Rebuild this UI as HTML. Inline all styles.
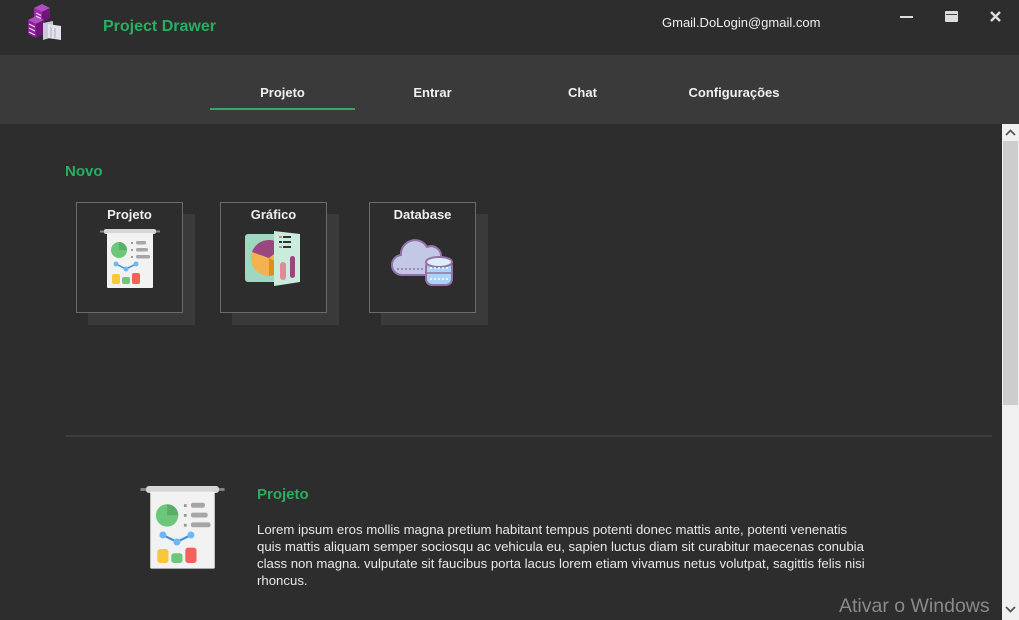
<!DOCTYPE html>
<html><head><meta charset="utf-8"><style>
*{margin:0;padding:0;box-sizing:border-box}
body{width:1019px;height:620px;overflow:hidden;background:#2d2d2d;font-family:"Liberation Sans","DejaVu Sans",sans-serif;position:relative;color:#eee}
.abs{position:absolute}
.top{left:0;top:0;width:1019px;height:55px;background:#2d2d2d}
.nav{left:0;top:55px;width:1019px;height:69px;background:#3b3a3a}
.tab{top:85px;font-size:13px;font-weight:bold;color:#f0f0f0;text-align:center}
.card{width:107px;height:111px;border:1px solid #6a6a6a;background:#2d2d2d}
.sh{width:107px;height:111px;background:#3b3a3a}
.ct{width:100%;text-align:center;font-size:13px;font-weight:bold;color:#eee;padding-top:4px}
</style></head><body>
<svg width="0" height="0" style="position:absolute"><defs>
<symbol id="proj" viewBox="0 0 60 60">
<rect x="0" y="1.5" width="60" height="2" fill="#888"/>
<rect x="4" y="0" width="52" height="5" rx="2" fill="#d6d6d6"/>
<rect x="7" y="4" width="46" height="55" rx="1" fill="#f2f2f2"/>
<circle cx="19" cy="21" r="8" fill="#6dc77a"/>
<path d="M19 21V13a8 8 0 0 1 8 8z" fill="#5aae68"/>
<rect x="31" y="13" width="2" height="2" fill="#999"/><rect x="36" y="12" width="10" height="3.5" rx="1.5" fill="#a6a6a6"/>
<rect x="31" y="20" width="2" height="2" fill="#999"/><rect x="36" y="19" width="12" height="3.5" rx="1.5" fill="#a6a6a6"/>
<rect x="31" y="27" width="2" height="2" fill="#999"/><rect x="36" y="26" width="14" height="3.5" rx="1.5" fill="#a6a6a6"/>
<path d="M16 35L26 40L36 35" stroke="#3f8fd6" stroke-width="1.5" fill="none"/>
<circle cx="16" cy="35" r="2.5" fill="#6bb8f5"/><circle cx="26" cy="40" r="2.5" fill="#6bb8f5"/><circle cx="36" cy="35" r="2.5" fill="#6bb8f5"/>
<rect x="12" y="45" width="8" height="10" rx="2" fill="#f8c83a"/>
<rect x="22" y="48" width="8" height="7" rx="2" fill="#6dc77a"/>
<rect x="32" y="44" width="8" height="11" rx="2" fill="#f4605a"/>
</symbol></defs></svg>

<div class="abs top"></div>
<svg class="abs" style="left:27px;top:3px" width="36" height="40" viewBox="0 0 36 40">
<path d="M15 1l8 4-8 4-8-4z" fill="#b04cbf"/>
<path d="M7 5l8 4v10l-8-4z" fill="#9b2ba8"/><path d="M23 5l-8 4v10l8-4z" fill="#6d1678"/>
<path d="M9 13l8 4-8 4-8-4z" fill="#b04cbf"/>
<path d="M1 17l8 4v14l-8-4z" fill="#8a2196"/><path d="M17 17l-8 4v14l8-4z" fill="#6d1678"/>
<path d="M2 21l6 3M2 25l6 3M2 29l6 3M9 10l5 2.5M9 13l5 2.5" stroke="#f3d9f5" stroke-width="1.2"/>
<path d="M16 20l10-2 0 16-10 3z" fill="#c9c9d9"/><path d="M21 21l13 2v14l-13-2z" fill="#e3e3ee"/>
<path d="M24 24v10M28 25v10" stroke="#a8a8c0" stroke-width="1"/>
</svg>
<div class="abs" style="left:103px;top:18px;font-size:16px;font-weight:bold;color:#27ae60">Project Drawer</div>
<div class="abs" style="left:662px;top:15px;font-size:13px;color:#f0f0f0">Gmail.DoLogin@gmail.com</div>
<div class="abs" style="left:900px;top:16px;width:13px;height:2px;background:#ddd"></div>
<div class="abs" style="left:945px;top:11px;width:13px;height:11px;background:#ddd;border-radius:1px"><div style="margin:3px 1px 0;height:1px;background:#444"></div></div>
<svg class="abs" style="left:990px;top:11px" width="11" height="11"><path d="M1 1l9 9M10 1l-9 9" stroke="#ddd" stroke-width="2.4"/></svg>

<div class="abs nav"></div>
<div class="abs tab" style="left:210px;width:145px">Projeto</div>
<div class="abs" style="left:210px;top:108px;width:145px;height:2px;background:#27ae60"></div>
<div class="abs tab" style="left:360px;width:145px">Entrar</div>
<div class="abs tab" style="left:510px;width:145px">Chat</div>
<div class="abs tab" style="left:660px;width:148px">Configurações</div>

<div class="abs" style="left:65px;top:163px;font-size:15px;font-weight:bold;color:#27ae60">Novo</div>

<div class="abs sh" style="left:88px;top:214px"></div>
<div class="abs card" style="left:76px;top:202px"><div class="ct">Projeto</div>
<svg class="abs" style="left:23px;top:26px" width="60" height="60"><use href="#proj"/></svg></div>

<div class="abs sh" style="left:232px;top:214px"></div>
<div class="abs card" style="left:220px;top:202px"><div class="ct">Gráfico</div>
<svg class="abs" style="left:23px;top:25px" width="62" height="62" viewBox="0 0 62 62">
<rect x="1" y="6" width="40" height="48" rx="3" fill="#9ed8c0"/>
<circle cx="25" cy="30" r="18" fill="#f1b24f"/>
<path d="M25 30V12a18 18 0 0 1 14 7z" fill="#9a4680"/>
<path d="M25 30L8 24a18 18 0 0 1 17-12z" fill="#9a4680"/>
<path d="M25 30l15 8a18 18 0 0 1-15 10z" fill="#e09018"/>
<path d="M30 3l26 3v48l-26 4z" fill="#c9ecdd"/>
<rect x="35" y="8" width="3" height="2" fill="#e07a95"/><rect x="39" y="8" width="8" height="2" fill="#333"/>
<rect x="35" y="13" width="3" height="2" fill="#333"/><rect x="39" y="13" width="8" height="2" fill="#333"/>
<rect x="35" y="18" width="3" height="2" fill="#e07a95"/><rect x="39" y="18" width="8" height="2" fill="#333"/>
<rect x="36" y="34" width="6" height="18" rx="3" fill="#e08a9a"/>
<rect x="46" y="28" width="5" height="22" rx="2.5" fill="#9a4680"/>
</svg></div>

<div class="abs sh" style="left:381px;top:214px"></div>
<div class="abs card" style="left:369px;top:202px"><div class="ct">Database</div>
<svg class="abs" style="left:21px;top:30px" width="64" height="56" viewBox="0 0 64 56">
<path d="M12 42a10 10 0 0 1-2-20a14 14 0 0 1 26-8a10 10 0 0 1 14 10a9 9 0 0 1-2 18z" fill="#c3c8e6" stroke="#9273a8" stroke-width="2"/>
<path d="M6 36h40" stroke="#9273a8" stroke-width="1.5" stroke-dasharray="2 2"/>
<rect x="35" y="28" width="26" height="24" rx="6" fill="#a9d4f3" stroke="#9273a8" stroke-width="2"/>
<ellipse cx="48" cy="29" rx="13" ry="5" fill="#dbeefa" stroke="#9273a8" stroke-width="2"/>
<path d="M36 40h24" stroke="#9273a8" stroke-width="1.5"/>
<path d="M39 46h18M39 35h18" stroke="#fff" stroke-width="1.5" stroke-dasharray="2 2"/>
</svg></div>

<div class="abs" style="left:66px;top:435px;width:926px;height:2px;background:#3d3d3d"></div>

<svg class="abs" style="left:139px;top:486px" width="87" height="84" viewBox="0 0 60 58" preserveAspectRatio="none"><use href="#proj"/></svg>
<div class="abs" style="left:257px;top:486px;font-size:15px;font-weight:bold;color:#27ae60">Projeto</div>
<div class="abs" style="left:257px;top:521px;width:612px;font-size:13.2px;line-height:17px;color:#e8e8e8">Lorem ipsum eros mollis magna pretium habitant tempus potenti donec mattis ante, potenti venenatis quis mattis aliquam semper sociosqu ac vehicula eu, sapien luctus diam sit curabitur maecenas conubia class non magna. vulputate sit faucibus porta lacus lorem etiam vivamus netus volutpat, sagittis felis nisi rhoncus.</div>

<div class="abs" style="left:839px;top:595px;font-size:19.5px;color:#8a8a8a">Ativar o Windows</div>

<div class="abs" style="left:1002px;top:124px;width:17px;height:496px;background:#f0f0f0"></div>
<div class="abs" style="left:1003px;top:141px;width:15px;height:264px;background:#cdcdcd"></div>
<svg class="abs" style="left:1005px;top:129px" width="11" height="8"><path d="M1 6l4.5-4.5L10 6" stroke="#555" stroke-width="1.8" fill="none"/></svg>
<svg class="abs" style="left:1005px;top:606px" width="11" height="8"><path d="M1 1l4.5 4.5L10 1" stroke="#555" stroke-width="1.8" fill="none"/></svg>
</body></html>
